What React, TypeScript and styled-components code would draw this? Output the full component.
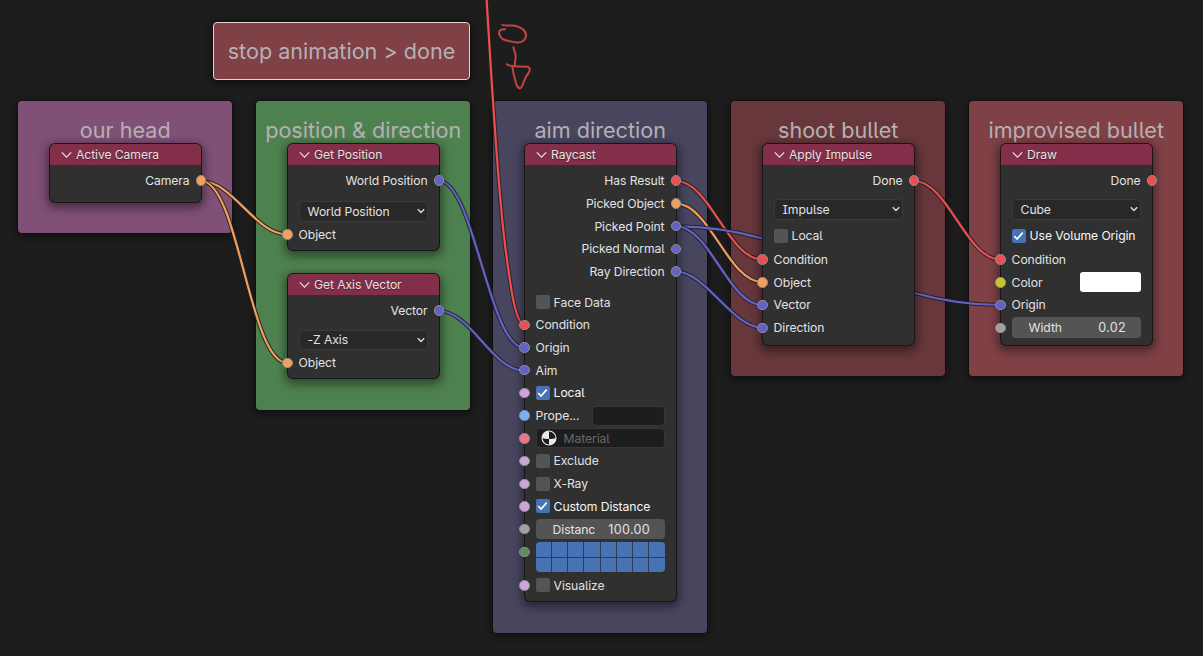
import React from "react";
import styled, { createGlobalStyle } from "styled-components";

const Global = createGlobalStyle`
  * { box-sizing: border-box; }
  body { margin: 0; background: #1d1d1d; overflow: hidden; }
`;

const Editor = styled.main`
  position: relative;
  width: 1203px;
  height: 656px;
  overflow: hidden;
  background: #1d1d1d;
  font-family: Inter, "Liberation Sans", sans-serif;
  font-feature-settings: "cv08" 1, "cv05" 1;
  color: #e2e2e2;
`;

interface Box { x: number; y: number; w: number; h: number }

const Frame = styled.section<Box & { tint: string; selected?: boolean }>`
  position: absolute;
  left: ${p => p.x}px;
  top: ${p => p.y}px;
  width: ${p => p.w}px;
  height: ${p => p.h}px;
  display: flex;
  justify-content: center;
  padding-top: 14px;
  border-radius: 4px;
  background: ${p => p.tint};
  border: 1px solid ${p => (p.selected ? "#e6d2d2" : "transparent")};
  background-clip: border-box;
  box-shadow: 0 0 0 1px rgba(0, 0, 0, 0.2), 0 2px 9px 2px rgba(0, 0, 0, 0.42);
`;

const FrameLabel = styled.h2`
  margin: 0;
  font-size: 21.6px;
  line-height: 28px;
  font-weight: 400;
  letter-spacing: 0;
  white-space: nowrap;
  color: #b6b0b3;
`;

const Overlay = styled.svg`
  position: absolute;
  inset: 0;
  pointer-events: none;
`;

const NodeCard = styled.article<Box>`
  position: absolute;
  left: ${p => p.x}px;
  top: ${p => p.y}px;
  width: ${p => p.w}px;
  height: ${p => p.h}px;
  border-radius: 5px;
  background: #303030;
  box-shadow: 0 0 0 1px #19161a, 0 3px 10px 3px rgba(0, 0, 0, 0.45);
`;

const NodeHeader = styled.header`
  display: flex;
  align-items: center;
  gap: 4px;
  height: 21px;
  padding-left: 11px;
  border-radius: 5px 5px 0 0;
  background: #832f4a;
  font-size: 12.2px;
  letter-spacing: -0.1px;
  white-space: nowrap;
  text-shadow: 0 1px 1px rgba(0, 0, 0, 0.4);
`;

const NodeBody = styled.div`
  display: flex;
  flex-direction: column;
  padding-top: 4.3px;
`;

const Row = styled.div<{ gap?: number; out?: boolean; tall?: boolean }>`
  position: relative;
  display: flex;
  flex: none;
  align-items: center;
  justify-content: ${p => (p.out ? "flex-end" : "flex-start")};
  height: ${p => (p.tall ? 33.6 : 22.7)}px;
  margin-top: ${p => p.gap ?? 0}px;
  padding: 0 11.5px 0 10.6px;
  font-size: 12.2px;
  letter-spacing: -0.1px;
  white-space: nowrap;
`;

const Socket = styled.i<{ color: string; out?: boolean }>`
  position: absolute;
  top: 6.2px;
  ${p => (p.out ? "right: -5.2px;" : "left: -5.7px;")}
  width: 10.4px;
  height: 10.4px;
  border-radius: 50%;
  border: 1.2px solid #8f8f8f;
  background: ${p => p.color};
`;

const CheckBox = styled.span<{ on?: boolean }>`
  display: grid;
  flex: none;
  place-items: center;
  width: 14px;
  height: 14px;
  margin-right: 4px;
  border-radius: 2px;
  background: ${p => (p.on ? "#4772b3" : "#545454")};
`;

const CheckLabel = styled.span<{ on?: boolean }>`
  color: ${p => (p.on ? "#f6f6f6" : "#e0e0e0")};
`;

const Menu = styled.div`
  display: flex;
  flex: 1;
  align-items: center;
  justify-content: space-between;
  height: 20.4px;
  padding: 0 2px 0 8px;
  border: 1px solid #3a3a3a;
  border-radius: 4px;
  background: #282828;
`;

const Slider = styled.div`
  display: flex;
  flex: 1;
  align-items: center;
  justify-content: space-between;
  height: 20.4px;
  padding: 0 14.5px 0 17px;
  border-radius: 4px;
  background: #545454;
`;

const Amount = styled.span`
  font-size: 12.6px;
  letter-spacing: 0.3px;
`;

const TextField = styled.div<{ w?: number }>`
  display: flex;
  align-items: center;
  gap: 7px;
  ${p => (p.w ? `width: ${p.w}px; margin-left: auto;` : "flex: 1;")}
  height: 20px;
  padding-left: 4px;
  border: 1px solid #363636;
  border-radius: 4px;
  background: #1d1d1d;
  color: #696969;
`;

const Swatch = styled.div`
  width: 60.5px;
  height: 19.6px;
  margin-left: auto;
  border-radius: 3px;
  background: #fff;
`;

const Layers = styled.div`
  display: grid;
  flex: 1;
  grid-template-columns: repeat(8, 1fr);
  gap: 1px;
  height: 30px;
  border-radius: 4px;
  overflow: hidden;
  background: #343c4b;
`;

const Layer = styled.span`
  background: #4772b3;
`;

const RED = "#ed4f4f";
const ORANGE = "#f0a05a";
const VIOLET = "#6363c7";
const PINK = "#cca6d6";
const GREY = "#a1a1a1";

const Collapse = () => (
  <svg width="11" height="8" viewBox="0 0 11 8" fill="none" stroke="#e6dfe2" strokeWidth="1.2">
    <path d="M.8 1.4 5.5 6.2l4.7-4.8" />
  </svg>
);

const Chevron = () => (
  <svg width="8" height="6" viewBox="0 0 8 6" fill="none" stroke="#dcdcdc" strokeWidth="1.4">
    <path d="M.8 1.2 4 4.4l3.2-3.2" />
  </svg>
);

const Tick = () => (
  <svg width="11" height="10" viewBox="0 0 11 10" fill="none" stroke="#fff" strokeWidth="1.7">
    <path d="M1.2 5 4.1 8 9.7 1.6" />
  </svg>
);

const MaterialIcon = () => (
  <svg width="16" height="16" viewBox="0 0 16 16">
    <circle cx="8" cy="8" r="7" fill="#1d1d1d" stroke="#e8e8e8" strokeWidth="1.1" />
    <path d="M8 9V1A7 7 0 0 0 1 8q3.500 1.300 7 1ZM8 9v6a7 7 0 0 0 7-7q-3.500 1.300-7 1Z" fill="#e8e8e8" />
  </svg>
);

interface NodeProps extends Box { title: string; children: React.ReactNode }
const Node = ({ title, children, ...box }: NodeProps) => (
  <NodeCard {...box}>
    <NodeHeader><Collapse />{title}</NodeHeader>
    <NodeBody>{children}</NodeBody>
  </NodeCard>
);

const Output = ({ label, color }: { label: string; color: string }) => (
  <Row out>{label}<Socket out color={color} /></Row>
);

const Input = ({ label, color, gap }: { label: string; color: string; gap?: number }) => (
  <Row gap={gap}><Socket color={color} />{label}</Row>
);

const Select = ({ value, gap }: { value: string; gap: number }) => (
  <Row gap={gap}><Menu>{value}<Chevron /></Menu></Row>
);

const Toggle = ({ label, on, socket, gap }: { label: string; on?: boolean; socket?: boolean; gap?: number }) => (
  <Row gap={gap}>
    {socket && <Socket color={PINK} />}
    <CheckBox on={on}>{on && <Tick />}</CheckBox>
    <CheckLabel on={on}>{label}</CheckLabel>
  </Row>
);

const links = [
  { color: ORANGE, d: "M201 181C233 181 255 234.500 287.500 234.500" },
  { color: ORANGE, d: "M201 181C239 181 249 363 287.500 363" },
  { color: VIOLET, d: "M439 181C474 181 489 348 524.500 348" },
  { color: VIOLET, d: "M439 311C471 311 492 370.700 524.500 370.700" },
  { color: RED, d: "M486.500-2C491 70 497 180 505 245C511 290 515 322 524.500 325" },
  { color: RED, d: "M676 181C710 181 728 259.500 762.500 259.500" },
  { color: ORANGE, d: "M676 203.700C710 203.700 728 282.200 762.500 282.200" },
  { color: VIOLET, d: "M676 226.300C806 226.300 871 305 1000.500 305" },
  { color: VIOLET, d: "M676 226.300C710 226.300 728 305 762.500 305" },
  { color: VIOLET, d: "M676 271.700C706 271.700 732 327.700 762.500 327.700" },
  { color: RED, d: "M914 181C948 181 966 259.500 1000.500 259.500" },
];

const frames = [
  { x: 213, y: 22, w: 257, h: 58, tint: "#7f4146", label: "stop animation > done", selected: true },
  { x: 18, y: 101, w: 214.400, h: 132, tint: "#805077", label: "our head" },
  { x: 256, y: 101, w: 214.400, h: 309.400, tint: "#4e8150", label: "position & direction" },
  { x: 493, y: 101, w: 214.400, h: 531.500, tint: "#48455f", label: "aim direction" },
  { x: 731, y: 101, w: 214.400, h: 275.400, tint: "#67373b", label: "shoot bullet" },
  { x: 969, y: 101, w: 214.400, h: 275.400, tint: "#7f4146", label: "improvised bullet" },
];

export default function App() {
  return (
    <Editor>
      <Global />
      {frames.map(({ label, ...frame }) => (
        <Frame key={label} {...frame}><FrameLabel>{label}</FrameLabel></Frame>
      ))}

      <Overlay width="1203" height="656" fill="none">
        <g stroke="#c04545" strokeWidth="2" strokeLinecap="round" strokeLinejoin="round">
          <path d="M502.500 24.800C504 26.500 509 25 515 25.700C521 27 526 31 526 35C526 40 522 43 516.500 42.500C511 42 507 40.500 503 39.300C499.500 36.500 498.500 34 499.300 31.500C500.500 29 502 29.500 505 29.200" />
          <path d="M513.500 47C513.500 50 516 53 515.700 57C515.500 60 514.500 62 515 65.700" />
          <path d="M506.700 64.200C510 66.800 515 66.300 519 66.500L528 66.800C530.500 68 530 70.500 528.500 73C526 76 525 78 524 81C523 84 522 88.500 519.500 88.500C517 87 515.500 82 515 79C513.500 75 513 71 512.500 67.500" />
        </g>
        {links.map(link => (
          <g key={link.d}>
            <path d={link.d} stroke="#201d22" strokeOpacity="0.850" strokeWidth="4.200" />
            <path d={link.d} stroke={link.color} strokeWidth="2.200" />
          </g>
        ))}
      </Overlay>

      <Node title="Active Camera" x={50} y={144} w={151} h={57.500}>
        <Output label="Camera" color={ORANGE} />
      </Node>

      <Node title="Get Position" x={288} y={144} w={151} h={106}>
        <Output label="World Position" color={VIOLET} />
        <Select value="World Position" gap={8} />
        <Input label="Object" color={ORANGE} gap={0.300} />
      </Node>

      <Node title="Get Axis Vector" x={288} y={274} w={151} h={104.400}>
        <Output label="Vector" color={VIOLET} />
        <Select value="-Z Axis" gap={6.400} />
        <Input label="Object" color={ORANGE} gap={0.500} />
      </Node>

      <Node title="Raycast" x={525} y={144} w={151} h={456.500}>
        <Output label="Has Result" color={RED} />
        <Output label="Picked Object" color={ORANGE} />
        <Output label="Picked Point" color={VIOLET} />
        <Output label="Picked Normal" color={VIOLET} />
        <Output label="Ray Direction" color={VIOLET} />
        <Toggle label="Face Data" gap={8.100} />
        <Input label="Condition" color={RED} />
        <Input label="Origin" color={VIOLET} />
        <Input label="Aim" color={VIOLET} />
        <Toggle label="Local" on socket />
        <Row><Socket color="#70b2ff" />Prope...<TextField w={73} /></Row>
        <Row><Socket color="#eb7582" /><TextField><MaterialIcon />Material</TextField></Row>
        <Toggle label="Exclude" socket />
        <Toggle label="X-Ray" socket />
        <Toggle label="Custom Distance" on socket />
        <Row><Socket color={GREY} /><Slider><span>Distanc</span><Amount>100.00</Amount></Slider></Row>
        <Row tall>
          <Socket color="#5d8f5d" />
          <Layers>{Array.from({ length: 16 }, (_, i) => <Layer key={i} />)}</Layers>
        </Row>
        <Toggle label="Visualize" socket />
      </Node>

      <Node title="Apply Impulse" x={763} y={144} w={151} h={201}>
        <Output label="Done" color={RED} />
        <Select value="Impulse" gap={6} />
        <Toggle label="Local" gap={3.500} />
        <Input label="Condition" color={RED} gap={1.400} />
        <Input label="Object" color={ORANGE} />
        <Input label="Vector" color={VIOLET} />
        <Input label="Direction" color={VIOLET} />
      </Node>

      <Node title="Draw" x={1001} y={144} w={151} h={201}>
        <Output label="Done" color={RED} />
        <Select value="Cube" gap={6} />
        <Toggle label="Use Volume Origin" on gap={3.500} />
        <Input label="Condition" color={RED} gap={1.400} />
        <Row><Socket color="#c7c729" />Color<Swatch /></Row>
        <Input label="Origin" color={VIOLET} />
        <Row><Socket color={GREY} /><Slider><span>Width</span><Amount>0.02</Amount></Slider></Row>
      </Node>
    </Editor>
  );
}
